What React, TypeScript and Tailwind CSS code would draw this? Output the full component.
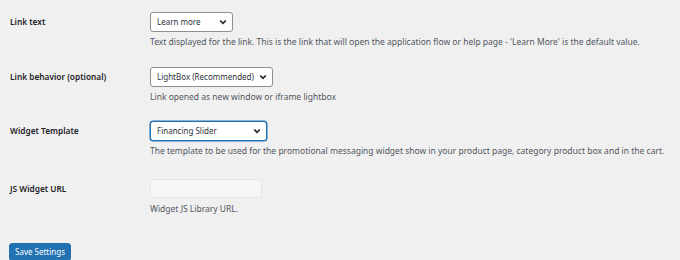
import React from 'react';

const font = { fontFamily: '"Noto Sans", "Open Sans", sans-serif' };

const Chevron: React.FC = () => (
  <svg width="8" height="6" viewBox="0 0 8 6" className="shrink-0">
    <path d="M1.2 1.5 L4 4.3 L6.8 1.5" fill="none" stroke="#1d2327" strokeWidth="1.6" />
  </svg>
);

type SelectProps = { value: string; width: string; focused?: boolean };

const FakeSelect: React.FC<SelectProps> = ({ value, width, focused }) => (
  <div
    className={`flex items-center justify-between h-[20px] ${width} bg-white rounded-[3px] pl-[6px] pr-[5px] text-[8px] text-[#2c3338] border ${
      focused ? 'border-[#2271b1] shadow-[0_0_0_0.5px_#2271b1]' : 'border-[#8c8f94]'
    }`}
  >
    <span className="whitespace-nowrap">{value}</span>
    <Chevron />
  </div>
);

const Row: React.FC<{ label: string; control: React.ReactNode; desc: string; className?: string; descGap?: string }> = ({
  label,
  control,
  desc,
  className = '',
  descGap = 'mt-[4px]',
}) => (
  <div className={`flex ${className}`}>
    <div className="w-[150px] pl-[10px] shrink-0 h-[20px] flex items-center text-[8.3px] font-semibold text-[#1d2327]">
      {label}
    </div>
    <div className="flex flex-col items-start">
      {control}
      <p className={`${descGap} text-[8.5px] leading-[12px] text-[#50575e] whitespace-nowrap`}>{desc}</p>
    </div>
  </div>
);

export default function App() {
  return (
    <div className="w-[680px] h-[260px] bg-[#f0f0f1] pt-[12px] overflow-hidden" style={font}>
      <Row
        label="Link text"
        control={<FakeSelect value="Learn more" width="w-[83px]" />}
        desc="Text displayed for the link. This is the link that will open the application flow or help page - 'Learn More' is the default value."
      />
      <Row
        className="mt-[19px]"
        label="Link behavior (optional)"
        control={<FakeSelect value="LightBox (Recommended)" width="w-[123px]" />}
        desc="Link opened as new window or iframe lightbox"
      />
      <Row
        className="mt-[18px]"
        label="Widget Template"
        control={<FakeSelect value="Financing Slider" width="w-[117px]" focused />}
        desc="The template to be used for the promotional messaging widget show in your product page, category product box and in the cart."
      />
      <Row
        className="mt-[22px]"
        descGap="mt-[5px]"
        label="JS Widget URL"
        control={
          <input
            disabled
            className="h-[19px] w-[112px] rounded-[3px] border border-[#e4e5e7] bg-[#f6f7f7]"
          />
        }
        desc="Widget JS Library URL."
      />
      <div className="mt-[22px] pl-[9px]">
        <button className="h-[18px] w-[62px] rounded-[3px] bg-[#2271b1] border border-[#2271b1] text-white text-[8px] leading-none whitespace-nowrap">
          Save Settings
        </button>
      </div>
    </div>
  );
}
